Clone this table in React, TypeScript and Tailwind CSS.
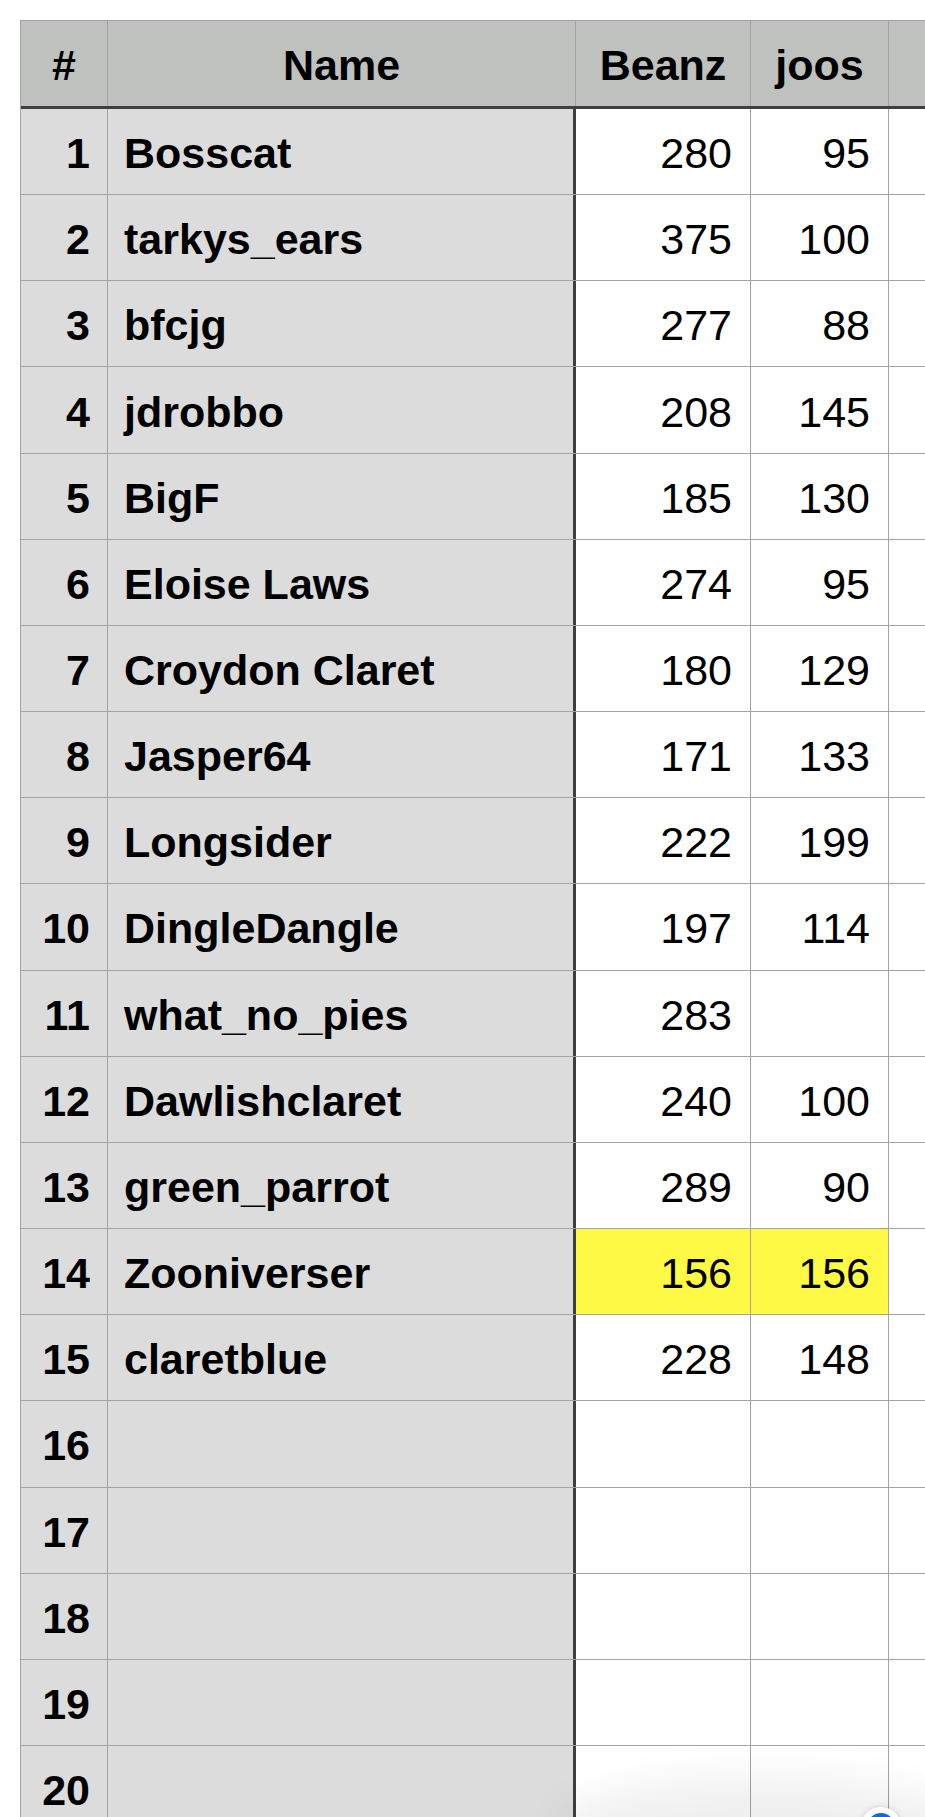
import React from "react";

type Row = { n: number; name: string; beanz: string; joos: string; hl?: boolean };

const rows: Row[] = [
  { n: 1, name: "Bosscat", beanz: "280", joos: "95" },
  { n: 2, name: "tarkys_ears", beanz: "375", joos: "100" },
  { n: 3, name: "bfcjg", beanz: "277", joos: "88" },
  { n: 4, name: "jdrobbo", beanz: "208", joos: "145" },
  { n: 5, name: "BigF", beanz: "185", joos: "130" },
  { n: 6, name: "Eloise Laws", beanz: "274", joos: "95" },
  { n: 7, name: "Croydon Claret", beanz: "180", joos: "129" },
  { n: 8, name: "Jasper64", beanz: "171", joos: "133" },
  { n: 9, name: "Longsider", beanz: "222", joos: "199" },
  { n: 10, name: "DingleDangle", beanz: "197", joos: "114" },
  { n: 11, name: "what_no_pies", beanz: "283", joos: "" },
  { n: 12, name: "Dawlishclaret", beanz: "240", joos: "100" },
  { n: 13, name: "green_parrot", beanz: "289", joos: "90" },
  { n: 14, name: "Zooniverser", beanz: "156", joos: "156", hl: true },
  { n: 15, name: "claretblue", beanz: "228", joos: "148" },
  { n: 16, name: "", beanz: "", joos: "" },
  { n: 17, name: "", beanz: "", joos: "" },
  { n: 18, name: "", beanz: "", joos: "" },
  { n: 19, name: "", beanz: "", joos: "" },
  { n: 20, name: "", beanz: "", joos: "" },
];

export default function App() {
  return (
    <div
      className="relative w-[925px] h-[1817px] overflow-hidden bg-white pt-[20px] pl-[20px] text-black"
      style={{ fontFamily: '"Liberation Sans", Arial, Helvetica, sans-serif' }}
    >
      <div className="w-[1100px] border-t border-l border-[#a3a3a3] text-[43px] leading-none">
        {/* header */}
        <div className="flex h-[88px] bg-[#bfc1bf] border-b-[3px] border-[#3f3f3f] font-bold">
          <div className="w-[87px] shrink-0 flex items-center justify-center pt-1 border-r border-[#a3a3a3]">#</div>
          <div className="w-[468px] shrink-0 flex items-center justify-center pt-1 border-r border-[#a3a3a3]">Name</div>
          <div className="w-[175px] shrink-0 flex items-center justify-center pt-1 border-r border-[#a3a3a3]">Beanz</div>
          <div className="w-[138px] shrink-0 flex items-center justify-center pt-1 border-r border-[#a3a3a3]">joos</div>
          <div className="flex-1" />
        </div>
        {rows.map((r) => (
          <div key={r.n} className="flex h-[86.17px] border-b border-[#a3a3a3]">
            <div className="w-[87px] shrink-0 flex items-center justify-end pr-[17px] pt-1 bg-[#dcdcdc] border-r border-[#a3a3a3] font-bold">
              {r.n}
            </div>
            <div className="w-[468px] shrink-0 flex items-center pl-[16px] pt-1 bg-[#dcdcdc] border-r-[3px] border-r-[#3f3f3f] font-bold">
              {r.name}
            </div>
            <div
              className={
                "w-[175px] shrink-0 flex items-center justify-end pr-[18px] pt-1 border-r border-[#a3a3a3] " +
                (r.hl ? "bg-[#fdf944]" : "bg-white")
              }
            >
              {r.beanz}
            </div>
            <div
              className={
                "w-[138px] shrink-0 flex items-center justify-end pr-[18px] pt-1 border-r border-[#a3a3a3] " +
                (r.hl ? "bg-[#fdf944]" : "bg-white")
              }
            >
              {r.joos}
            </div>
            <div className="flex-1 bg-white" />
          </div>
        ))}
      </div>

      {/* bottom floating shadow */}
      <div className="pointer-events-none absolute left-[560px] right-[-40px] bottom-[-60px] h-[100px] rounded-[50%] bg-black/[0.06] blur-[18px]" />
      {/* floating button peeking */}
      <div className="absolute left-[861px] top-[1807px] w-[40px] h-[40px] rounded-full bg-white shadow-[0_0_6px_rgba(0,0,0,0.15)] flex items-center justify-center">
        <div className="w-[28px] h-[28px] rounded-full bg-[#1a66d9]" />
      </div>
    </div>
  );
}
